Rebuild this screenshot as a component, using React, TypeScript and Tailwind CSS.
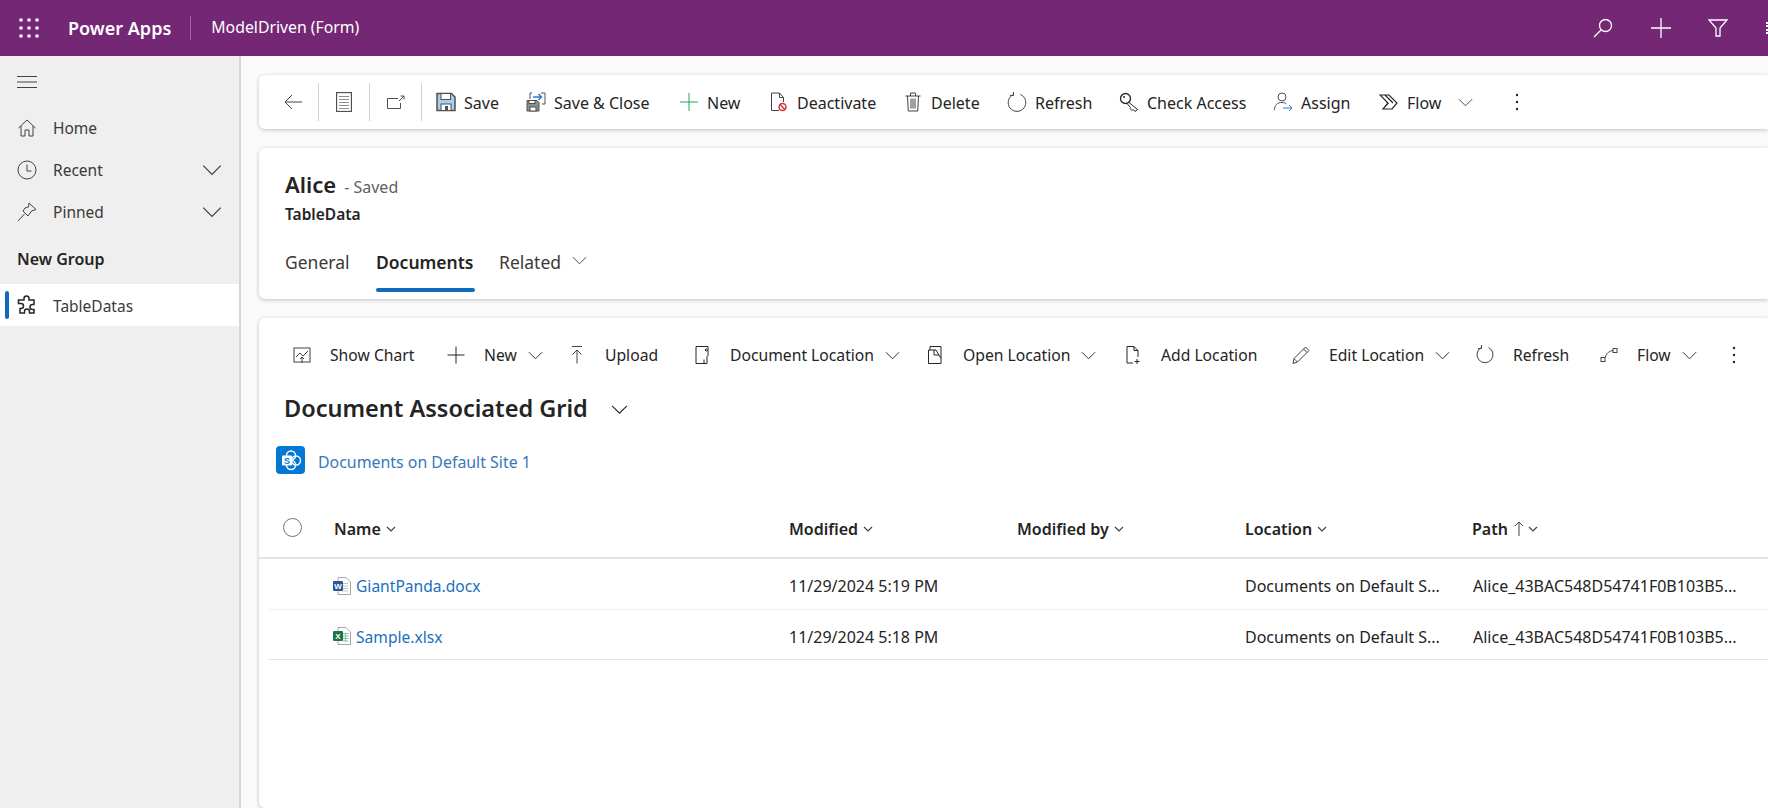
import type { ReactNode } from "react";

const FONT = "font-['Noto_Sans','Open_Sans',sans-serif]";

// thin line icon wrapper, 20 box like the fluent ones
function Ico({ children, className = "w-5 h-5" }: { children: ReactNode; className?: string }) {
  return (
    <svg viewBox="0 0 20 20" fill="none" stroke="currentColor" strokeWidth="1" className={`${className} shrink-0`}>
      {children}
    </svg>
  );
}

function Chevron({ className = "w-4 h-4" }: { className?: string }) {
  return (
    <svg viewBox="0 0 16 16" fill="none" stroke="currentColor" strokeWidth="1" className={`${className} shrink-0`}>
      <path d="M1 4.500 8 11.500 15 4.500" />
    </svg>
  );
}

function Dots() {
  return (
    <svg viewBox="0 0 4 20" className="w-1 h-5 shrink-0" fill="#242424">
      <circle cx="2" cy="3" r="1.200" />
      <circle cx="2" cy="10" r="1.200" />
      <circle cx="2" cy="17" r="1.200" />
    </svg>
  );
}

function SmallChevron() {
  return (
    <svg viewBox="0 0 10 10" fill="none" stroke="#424242" strokeWidth="1.200" className="w-[10px] h-[10px] shrink-0">
      <path d="M1 3 5 7 9 3" />
    </svg>
  );
}

const SaveIcon = (
  <Ico>
    <path d="M1 1.500h14.500L19 5v13.500H1z" fill="#a9cdec" stroke="#505050" strokeWidth="1.500" />
    <rect x="5" y="1.500" width="9.500" height="6" fill="#fff" stroke="#505050" />
    <rect x="5" y="12" width="10" height="6.500" fill="#fff" stroke="#505050" />
    <rect x="9" y="14" width="3" height="4.500" fill="#505050" stroke="none" />
  </Ico>
);

const SaveCloseIcon = (
  <Ico>
    <path d="M1 8.500h10l2 2v8.500H1z" fill="#8f8f8f" stroke="#505050" />
    <rect x="3" y="8.500" width="6" height="3" fill="#fff" stroke="#505050" />
    <rect x="4" y="15" width="6" height="4" fill="#fff" stroke="#505050" />
    <path d="M4 7V1h2M15 1h4v11h-3" stroke="#505050" />
    <path d="M7 5h8M12.500 2l3 3-3 3" stroke="#2b7cd3" strokeWidth="1.500" />
  </Ico>
);

const cmdItems: { label: string; icon: ReactNode; cls: string }[] = [
  { label: "Save", cls: "w-[90px]", icon: SaveIcon },
  { label: "Save & Close", cls: "w-[153px]", icon: SaveCloseIcon },
  {
    label: "New",
    cls: "w-[90px]",
    icon: (
      <Ico className="w-5 h-5 text-[#22a55b]">
        <path d="M10 1v18M1 10h18" />
      </Ico>
    ),
  },
  {
    label: "Deactivate",
    cls: "w-[134px]",
    icon: (
      <Ico>
        <path d="M10 18.500H2.500V1h8l4 4.500V10M10.500 1v4.500h4" stroke="#424242" />
        <circle cx="13.500" cy="15" r="3.500" stroke="#d13438" strokeWidth="1.500" />
        <path d="M11 12.500 16 17.500" stroke="#d13438" strokeWidth="1.500" />
      </Ico>
    ),
  },
  {
    label: "Delete",
    cls: "w-[104px]",
    icon: (
      <Ico>
        <path d="M2.500 4h15M7.500 4V1h5v3M4.500 4l.8 15h9.400l.8-15M8 6.500v10M10 6.500v10M12 6.500v10" stroke="#424242" />
      </Ico>
    ),
  },
  {
    label: "Refresh",
    cls: "w-[112px]",
    icon: (
      <Ico>
        <path d="M6.500 2.500a8.800 8.800 0 1 0 7 0M6.500 0v3.500H3" stroke="#424242" />
      </Ico>
    ),
  },
  {
    label: "Check Access",
    cls: "w-[154px]",
    icon: (
      <Ico>
        <circle cx="6.500" cy="6.500" r="5" stroke="#242424" strokeWidth="1.300" />
        <circle cx="5" cy="5" r="1" fill="#242424" stroke="none" />
        <path d="M10 10.500 18.500 17.500 16 19.500 14 17.500 13 18.500 11 16.500 11.500 15.500 8 11.500" stroke="#242424" />
      </Ico>
    ),
  },
  {
    label: "Assign",
    cls: "w-[106px]",
    icon: (
      <Ico>
        <circle cx="9" cy="5" r="4" stroke="#505050" />
        <path d="M1.500 18c0-5 3-7.500 7.500-7.500 2 0 3.500.5 4.500 1.500" stroke="#505050" />
        <path d="M10 16h9M16 13l3 3-3 3" stroke="#2b7cd3" />
      </Ico>
    ),
  },
];

const gridItems: { label: string; icon: ReactNode; cls: string; chev?: boolean }[] = [
  {
    label: "Show Chart",
    cls: "w-[154px]",
    icon: (
      <Ico>
        <rect x="2" y="3" width="16" height="14" stroke="#424242" />
        <path d="M4 12l4-4 3 3 5-5M10 18v-6M8 14l2-2 2 2" stroke="#424242" />
      </Ico>
    ),
  },
  {
    label: "New",
    cls: "w-[121px]",
    chev: true,
    icon: (
      <Ico>
        <path d="M10 1.500v17M1.500 10h17" stroke="#242424" />
      </Ico>
    ),
  },
  {
    label: "Upload",
    cls: "w-[125px]",
    icon: (
      <Ico>
        <path d="M5 1.500h10M10 18.500V5M5.500 9.500 10 5l4.500 4.500" stroke="#424242" />
      </Ico>
    ),
  },
  {
    label: "Document Location",
    cls: "w-[233px]",
    chev: true,
    icon: (
      <Ico>
        <path d="M16 11V1.500H4v17h8" stroke="#242424" />
        <path d="M16 5h-3l1.500-1.500M13 5l1.500 1.500M15 11v7.500h-3v-4" stroke="#242424" />
      </Ico>
    ),
  },
  {
    label: "Open Location",
    cls: "w-[198px]",
    chev: true,
    icon: (
      <Ico>
        <path d="M5 5V1.500h11v12M3.500 5H11l5 8.500v5H3.500z" stroke="#242424" />
        <path d="M9 5v5h5" stroke="#242424" />
      </Ico>
    ),
  },
  {
    label: "Add Location",
    cls: "w-[168px]",
    icon: (
      <Ico>
        <path d="M10 18H4V1.500h7l4 4V12M11 1.500v4h4M14 14v5M11.500 16.500h5" stroke="#242424" />
      </Ico>
    ),
  },
  {
    label: "Edit Location",
    cls: "w-[184px]",
    chev: true,
    icon: (
      <Ico>
        <path d="M14.500 2 18 5.500 6.500 17 2 18.500 3 13.500zM12.500 4l3.500 3.500M3 13.500 6.500 17" stroke="#424242" />
      </Ico>
    ),
  },
  {
    label: "Refresh",
    cls: "w-[124px]",
    icon: (
      <Ico>
        <path d="M6.500 2.500a8 8 0 1 0 7 0M6.500 0v3.500H3" stroke="#424242" />
      </Ico>
    ),
  },
  {
    label: "Flow",
    cls: "w-[133px]",
    chev: true,
    icon: (
      <Ico>
        <rect x="2" y="12.500" width="4" height="4" stroke="#424242" />
        <rect x="14" y="3.500" width="4" height="4" stroke="#424242" />
        <path d="M6 12.500C8 8 10 6 14 5.500" stroke="#424242" />
      </Ico>
    ),
  },
];

function Divider() {
  return <div className="w-px h-[38px] bg-[#d1d1d1]" />;
}

function NavRow({ label, icon, chevron }: { label: string; icon: ReactNode; chevron?: boolean }) {
  return (
    <div className="h-[42px] flex items-center pl-[17px] text-[#3b3a39]">
      <div className="w-[36px] text-[#424242]">{icon}</div>
      <span className="text-[15.500px] pt-[2px]">{label}</span>
      {chevron && (
        <div className="ml-auto mr-[17px] text-[#424242]">
          <Chevron className="w-5 h-5" />
        </div>
      )}
    </div>
  );
}

function WordIcon() {
  return (
    <svg viewBox="0 0 18 18" className="w-[18px] h-[18px] shrink-0">
      <path d="M5 .500h8l4.500 4.500v12.500H5z" fill="#fff" stroke="#a6a6a6" />
      <path d="M9 6.500h6.500M9 9h6.500M9 11.500h6.500M9 14h6.500" stroke="#c8c8c8" />
      <rect x="0" y="4" width="10" height="10" rx="1" fill="#2b579a" />
      <text x="5" y="12" textAnchor="middle" fontSize="8" fontWeight="700" fill="#fff" fontFamily="Liberation Sans">W</text>
    </svg>
  );
}

function ExcelIcon() {
  return (
    <svg viewBox="0 0 18 18" className="w-[18px] h-[18px] shrink-0">
      <path d="M5 .500h8l4.500 4.500v12.500H5z" fill="#fff" stroke="#a6a6a6" />
      <path d="M10 6.500h5.500M10 9h5.500M10 11.500h5.500M10 14h5.500M12.500 6v8.500" stroke="#7fc59f" />
      <rect x="0" y="4" width="10" height="10" rx="1" fill="#217346" />
      <text x="5" y="12" textAnchor="middle" fontSize="8" fontWeight="700" fill="#fff" fontFamily="Liberation Sans">X</text>
    </svg>
  );
}

function HeadCell({ label, cls, arrow }: { label: string; cls: string; arrow?: boolean }) {
  return (
    <div className={`${cls} h-[22px] flex items-center gap-[5px]`}>
      <span className="text-[16px] leading-[22px] font-semibold text-[#242424]">{label}</span>
      {arrow && (
        <svg viewBox="0 0 12 16" fill="none" stroke="#424242" strokeWidth="1" className="w-3 h-4 shrink-0 mr-[-2px]">
          <path d="M6 15V1M2 5l4-4 4 4" />
        </svg>
      )}
      <SmallChevron />
    </div>
  );
}

function FileRow({ icon, name, date, cls }: { icon: ReactNode; name: string; date: string; cls: string }) {
  return (
    <div className={`ml-[9px] pt-[4px] flex items-center text-[16px] text-[#242424] border-b ${cls}`}>
      <div className="w-[65px] shrink-0" />
      <div className="w-[456px] shrink-0 flex items-center gap-[5px]">
        {icon}
        <span className="text-[15.600px] pt-[2px] text-[#1a6fc0]">{name}</span>
      </div>
      <div className="w-[228px] shrink-0">{date}</div>
      <div className="w-[228px] shrink-0" />
      <div className="w-[228px] shrink-0 whitespace-nowrap">Documents on Default S...</div>
      <div className="w-[261px] shrink-0 whitespace-nowrap">Alice_43BAC548D54741F0B103B5...</div>
    </div>
  );
}

export default function App() {
  return (
    <div className={`h-[808px] w-[1768px] overflow-hidden flex flex-col bg-[#fafafa] ${FONT}`}>
      {/* top bar */}
      <header className="h-[56px] shrink-0 bg-[#742774] text-white flex items-center">
        <svg viewBox="0 0 20 20" fill="#fff" className="ml-[19px] w-5 h-5 shrink-0">
          {[2, 10, 18].map((y) =>
            [2, 10, 18].map((x) => <circle key={`${x}-${y}`} cx={x} cy={y} r="1.800" />)
          )}
        </svg>
        <span className="ml-[29px] text-[18px] font-semibold">Power Apps</span>
        <div className="ml-[19px] w-px h-[24px] bg-white/30" />
        <span className="ml-[20px] text-[15.800px]">ModelDriven (Form)</span>
        <div className="ml-auto flex items-center">
          <svg viewBox="0 0 20 20" fill="none" stroke="#fff" strokeWidth="1.300" className="w-5 h-5 shrink-0">
            <circle cx="12.500" cy="7.500" r="6" />
            <path d="M8 12 1 19" />
          </svg>
          <svg viewBox="0 0 20 20" fill="none" stroke="#fff" strokeWidth="1.300" className="ml-[38px] w-5 h-5 shrink-0">
            <path d="M10 0v20M0 10h20" />
          </svg>
          <svg viewBox="0 0 20 20" fill="none" stroke="#fff" strokeWidth="1.300" className="ml-[37px] w-5 h-5 shrink-0">
            <path d="M1 2h18l-7 8v8H8v-8z" />
          </svg>
          <div className="ml-[38px] w-px h-[12px] border-l-2 border-dotted border-white" />
        </div>
      </header>

      <div className="flex flex-1 min-h-0">
        {/* left nav */}
        <aside className="w-[241px] shrink-0 bg-[#efefef] border-r-2 border-[#d6d6d6]">
          <div className="h-[44px] pl-[17px] pt-[20px]">
            <svg viewBox="0 0 20 12" fill="none" stroke="#424242" strokeWidth="1" className="w-5 h-3">
              <path d="M0 .500h20M0 6h20M0 11.500h20" />
            </svg>
          </div>
          <div className="mt-[7px]">
            <NavRow
              label="Home"
              icon={
                <Ico>
                  <path d="M1.500 10 10 2l8.500 8M4 8v10h4v-6h4v6h4V8" />
                </Ico>
              }
            />
            <NavRow
              label="Recent"
              chevron
              icon={
                <Ico>
                  <circle cx="10" cy="10" r="9" />
                  <path d="M10 4.500V11h4.500" />
                </Ico>
              }
            />
            <NavRow
              label="Pinned"
              chevron
              icon={
                <Ico>
                  <path d="M12 1 19 7.500 14.500 9 11 14 9 12 6 9 8 6l3.500-1zM7.500 12 1 19" />
                </Ico>
              }
            />
          </div>
          <div className="pl-[17px] mt-[15px] h-[31px] text-[16px] leading-[22px] font-semibold text-[#242424]">New Group</div>
          <div className="h-[42px] mt-[5px] bg-white flex items-center relative pl-[17px]">
            <div className="absolute left-[5px] top-[7px] w-1 h-[28px] rounded-sm bg-[#0f6cbd]" />
            <div className="w-[36px]">
              <Ico className="w-5 h-5 text-[#242424]">
                <path
                  d="M7 3.500a2.500 2.500 0 0 1 5 0V5h5v4.500h-1.500a2.500 2.500 0 0 0 0 5H17V18h-4.500v-1.500a2.500 2.500 0 0 0-5 0V18H3v-4.500h1a2.500 2.500 0 0 0 0-5H1.500V5H7z"
                  strokeWidth="1.500"
                />
              </Ico>
            </div>
            <span className="text-[15.500px] pt-[3px] text-[#3b3a39]">TableDatas</span>
          </div>
        </aside>

        {/* main */}
        <main className="flex-1 min-w-0 pl-[18px] pt-[19px] flex flex-col">
          {/* record command bar */}
          <div className="h-[54px] shrink-0 bg-white rounded-l-[6px] shadow-[0_1px_4px_rgba(0,0,0,0.22)] flex items-center pl-[25px] text-[16px] text-[#242424]">
            <div className="w-[34px] text-[#424242]">
              <svg viewBox="0 0 18 16" fill="none" stroke="currentColor" strokeWidth="1" className="w-[18px] h-4">
                <path d="M18 8H1M8 1 1 8l7 7" />
              </svg>
            </div>
            <Divider />
            <div className="w-[50px] flex justify-center">
              <svg viewBox="0 0 16 20" fill="none" stroke="#505050" strokeWidth="1" className="w-4 h-5">
                <rect x=".500" y=".500" width="15" height="19" strokeWidth="1.300" />
                <path d="M3 4.500h10M3 7.500h10M3 10.500h10M3 13.500h10M3 16.500h10" stroke="#8a8a8a" />
              </svg>
            </div>
            <Divider />
            <div className="w-[51px] flex justify-center">
              <svg viewBox="0 0 18 14" fill="none" stroke="#505050" strokeWidth="1" className="w-[18px] h-[14px]">
                <path d="M11 3.500H.500v10h13V8M12 6l5-5M13.500 1H17v3.500" />
              </svg>
            </div>
            <Divider />
            <div className="w-[14px]" />
            {cmdItems.map((it) => (
              <div key={it.label} className={`${it.cls} shrink-0 flex items-center gap-2`}>
                {it.icon}
                <span className="pt-[2px]">{it.label}</span>
              </div>
            ))}
            <div className="w-[136px] shrink-0 flex items-center gap-2">
              <Ico>
                <path d="M1 3h9l8 8-5 6H4l5-6zM6 3l8 8M9.500 11l-3 3" stroke="#242424" strokeWidth="1.200" />
              </Ico>
              <span className="pt-[2px]">Flow</span>
              <div className="ml-[9px] text-[#424242]">
                <Chevron className="w-[15px] h-[15px]" />
              </div>
            </div>
            <Dots />
          </div>

          {/* record header */}
          <div className="mt-[19px] h-[151px] shrink-0 bg-white rounded-l-[6px] shadow-[0_1px_4px_rgba(0,0,0,0.22)] pl-[26px] text-[#242424]">
            <div className="pt-[20px] h-[50px] flex items-baseline gap-[8px]">
              <span className="text-[22px] font-semibold">Alice</span>
              <span className="text-[16px] text-[#616161]">- Saved</span>
            </div>
            <div className="text-[15.500px] leading-[22px] font-semibold h-[34px] mt-[5px]">TableData</div>
            <div className="flex items-start h-[50px] text-[17.500px] leading-[24px] mt-[9px]">
              <div className="w-[91px] pt-[4px] text-[#3b3a39]">General</div>
              <div className="w-[123px] h-[48px] pt-[4px] font-semibold relative">
                Documents
                <div className="absolute left-0 top-[42px] w-[99px] h-1 rounded-full bg-[#0f6cbd]" />
              </div>
              <div className="pt-[4px] text-[#3b3a39]">Related</div>
              <div className="ml-[11px] mt-[7px] text-[#424242]">
                <Chevron className="w-[15px] h-[15px]" />
              </div>
            </div>
          </div>

          {/* grid card */}
          <div className="mt-[19px] flex-1 min-h-0 bg-white rounded-l-[6px] shadow-[0_1px_4px_rgba(0,0,0,0.22)]">
            <div className="h-[67px] pl-[33px] pt-[17px] flex items-start text-[15.700px] text-[#242424]">
              {gridItems.map((it) => (
                <div key={it.label} className={`${it.cls} shrink-0 flex items-center gap-[18px] h-[40px]`}>
                  {it.icon}
                  <span className="pt-[2px]">{it.label}</span>
                  {it.chev && (
                    <div className="-ml-[7px] text-[#242424]">
                      <Chevron className="w-[15px] h-[15px]" />
                    </div>
                  )}
                </div>
              ))}
              <div className="h-[40px] flex items-center">
                <Dots />
              </div>
            </div>

            <div className="pl-[25px] h-[48px] flex items-center gap-[23px] text-[#242424]">
              <span className="text-[23.500px] font-semibold">Document Associated Grid</span>
              <Chevron className="w-[17px] h-[17px]" />
            </div>

            <div className="mt-[9px] pl-[17px] h-[36px] flex items-center gap-[13px]">
              <svg viewBox="0 0 29 28" className="w-[29px] h-[28px] shrink-0">
                <rect width="29" height="28" rx="4" fill="#0078d4" />
                <circle cx="15" cy="9.500" r="4.500" fill="none" stroke="#fff" strokeWidth="1.500" />
                <circle cx="20" cy="14.500" r="4.500" fill="none" stroke="#fff" strokeWidth="1.500" />
                <circle cx="15" cy="19" r="4.500" fill="none" stroke="#fff" strokeWidth="1.500" />
                <rect x="6" y="9.500" width="10" height="10" rx="1" fill="#fff" />
                <text x="11" y="17.500" textAnchor="middle" fontSize="9" fontWeight="700" fill="#0078d4" fontFamily="Liberation Sans">S</text>
              </svg>
              <span className="text-[15.900px] pt-[5px] text-[#3878b8]">Documents on Default Site 1</span>
            </div>

            {/* table */}
            <div className="mt-[40px] h-[41px] flex items-start border-b-2 border-[#e3e3e3]">
              <div className="w-[75px] shrink-0 pl-[24px]">
                <div className="w-[19px] h-[19px] rounded-full border border-[#757575]" />
              </div>
              <HeadCell label="Name" cls="w-[455px] shrink-0" />
              <HeadCell label="Modified" cls="w-[228px] shrink-0" />
              <HeadCell label="Modified by" cls="w-[228px] shrink-0" />
              <HeadCell label="Location" cls="w-[227px] shrink-0" />
              <HeadCell label="Path" cls="w-[220px] shrink-0" arrow />
            </div>
            <FileRow icon={<WordIcon />} name="GiantPanda.docx" date="11/29/2024 5:19 PM" cls="h-[51px] border-[#f0f0f0]" />
            <FileRow icon={<ExcelIcon />} name="Sample.xlsx" date="11/29/2024 5:18 PM" cls="h-[50px] border-[#e3e3e3]" />
          </div>
        </main>
      </div>
    </div>
  );
}
